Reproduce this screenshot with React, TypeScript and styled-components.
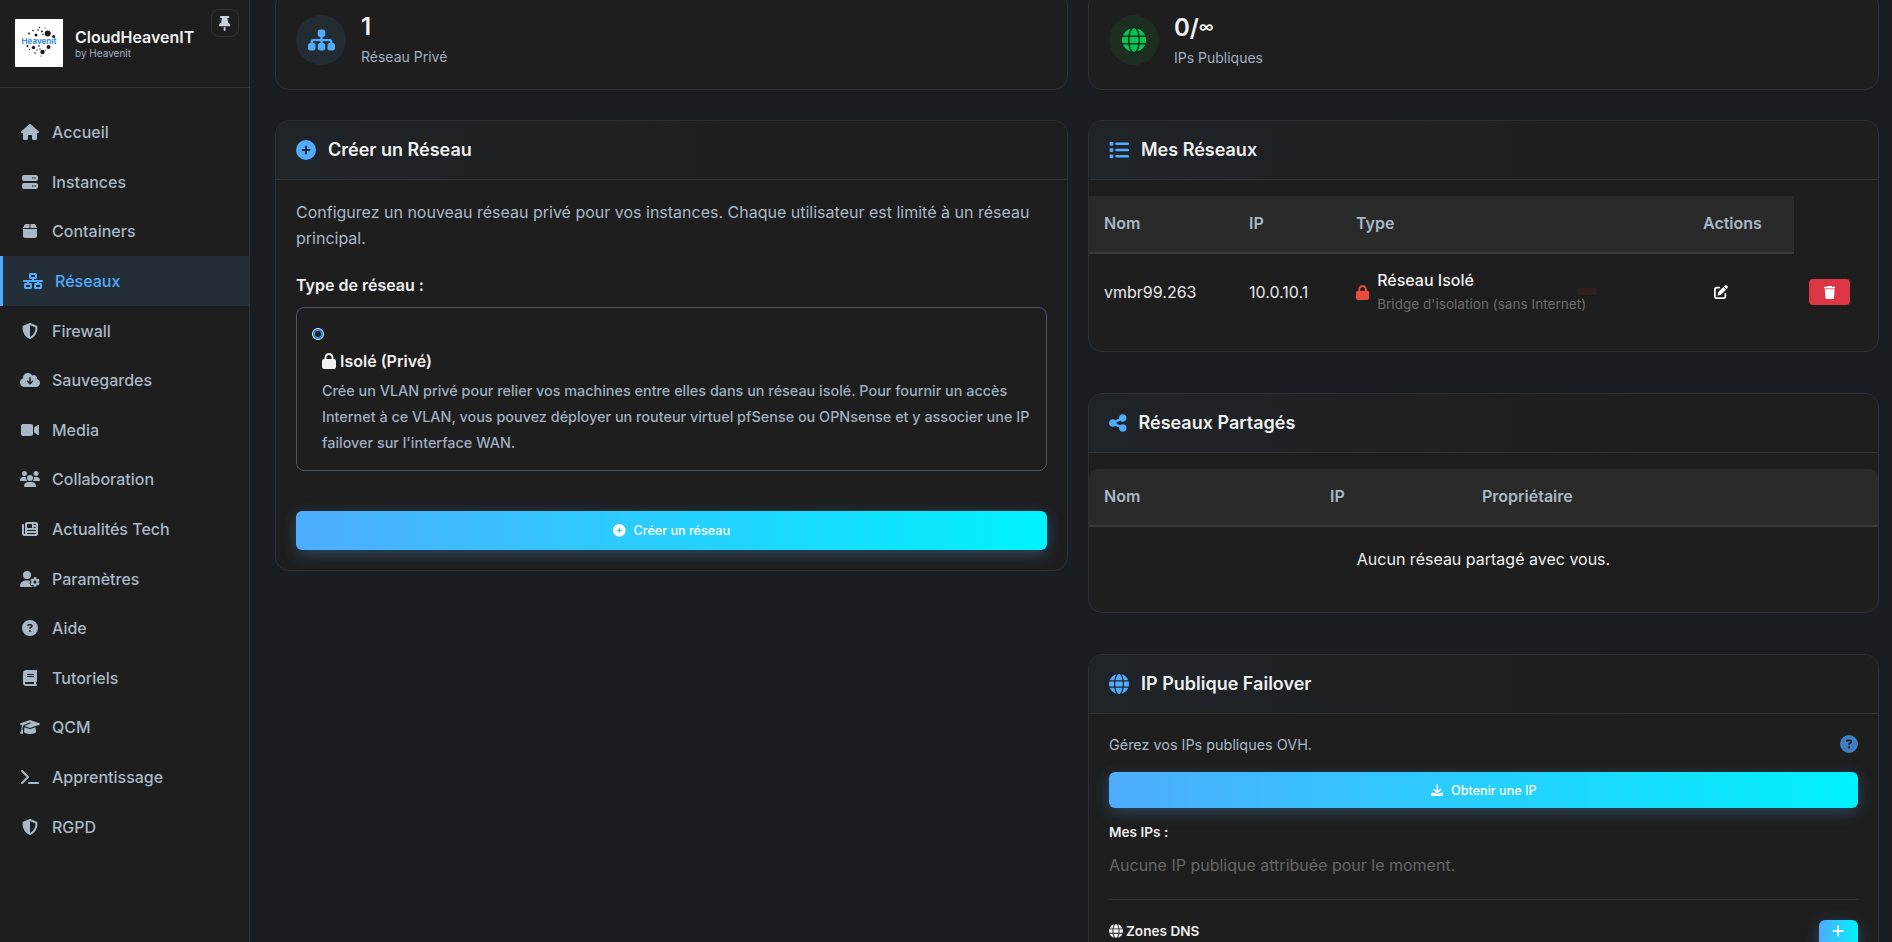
import React from 'react'
import styled, { createGlobalStyle } from 'styled-components'
import {
    FaBook, FaBox, FaCirclePlus, FaCircleQuestion, FaCloudArrowDown, FaDownload, FaGlobe, FaGraduationCap, FaHouse, FaList, FaLock,
    FaNetworkWired, FaNewspaper, FaPenToSquare, FaPlus, FaServer, FaShareNodes, FaShieldHalved,
    FaSitemap, FaTerminal, FaThumbtack, FaTrash, FaUserGear, FaUsers, FaVideo,
} from 'react-icons/fa6'

const GlobalStyle = createGlobalStyle`
    * { box-sizing: border-box; }
    html, body { margin: 0; height: 100%; overflow: hidden; }
    body {
        background: #1a1d21;
        color: #e8e8e8;
        font-family: Inter, "Liberation Sans", sans-serif;
    }
`

// font awesome glyphs are 1em high and as wide as their viewBox, react-icons squeezes them into a 1em square
const Glyph = styled.span<{ vw?: number }>`
    display: flex;
    svg {
        height: 1em;
        width: ${props => (props.vw ?? 512) / 512}em;
    }
`

const Shell = styled.div`
    display: flex;
    height: 100vh;
    overflow: hidden;
`

const Sidebar = styled.aside`
    flex: 0 0 250px;
    background: #1e1e1e;
    border-right: 1px solid #2c3034;
`

const Brand = styled.div`
    position: relative;
    display: flex;
    align-items: center;
    gap: 12px;
    height: 88px;
    padding: 0 15px 2px;
    border-bottom: 1px solid #333;
`

const LogoBox = styled.div`
    flex: 0 0 48px;
    height: 48px;
    background: #fff;
`

const BrandName = styled.div`
    font-size: 16px;
    font-weight: 600;
    line-height: 20px;
    color: #f0f0f0;
`

const BrandSub = styled.div`
    font-size: 10px;
    line-height: 12px;
    color: #a0aec0;
`

const PinButton = styled.button`
    position: absolute;
    top: 9px;
    right: 10px;
    width: 28px;
    height: 28px;
    display: flex;
    align-items: center;
    justify-content: center;
    padding: 0;
    font-size: 15px;
    color: #c9d3dd;
    background: #1e1e1e;
    border: 1px solid #333;
    border-radius: 8px;
`

const Nav = styled.nav`
    display: flex;
    flex-direction: column;
    padding-top: 19.5px;
`

const NavItem = styled.a<{ active?: boolean }>`
    display: flex;
    align-items: center;
    gap: 12px;
    height: 49.6px;
    padding-left: 20px;
    font-size: 16px;
    font-weight: 500;
    color: ${props => props.active ? '#4facfe' : '#a9b8c6'};
    background: ${props => props.active ? '#242e38' : 'transparent'};
    border-left: ${props => props.active ? '3px solid #4facfe' : 'none'};
`

const NavIcon = styled(Glyph)`
    flex: 0 0 20px;
    justify-content: center;
    font-size: 16px;
    color: inherit;
`

const Main = styled.main`
    flex: 1;
    padding: 0 13px 0 25px;
    overflow: hidden;
`

const TopRow = styled.div`
    display: grid;
    grid-template-columns: 793px 1fr;
    gap: 20px;
    margin-top: -9px;
`

const Columns = styled.div`
    display: grid;
    grid-template-columns: 793px 1fr;
    gap: 20px;
    margin-top: 30px;
`

const Column = styled.div`
    display: flex;
    flex-direction: column;
    gap: 41px;
`

const Card = styled.section`
    background: #1e1e1e;
    border: 1px solid #2c3034;
    border-radius: 14px;
    overflow: hidden;
`

const StatBody = styled.div`
    display: flex;
    align-items: center;
    gap: 15px;
    padding: 20px 20px 21px;
`

const StatIcon = styled(Glyph)<{ tint: string; bg: string }>`
    flex: 0 0 50px;
    height: 50px;
    align-items: center;
    justify-content: center;
    font-size: 24px;
    border-radius: 50%;
    color: ${props => props.tint};
    background: ${props => props.bg};
`

const StatValue = styled.div`
    font-size: 24px;
    font-weight: 600;
    line-height: 29px;
    color: #f2f2f2;
`

const StatUnit = styled.span`
    font-size: 15px;
    vertical-align: 4px;
`

const StatLabel = styled.div`
    margin-top: 5px;
    font-size: 14px;
    line-height: 21px;
    color: #a0aec0;
`

const CardHeader = styled.header`
    display: flex;
    align-items: center;
    gap: 12px;
    height: 59px;
    padding: 0 20px 1px;
    font-size: 18px;
    font-weight: 600;
    color: #f0f0f0;
    background: linear-gradient(90deg, #1f2429 0%, #1e1e1e 70%);
    border-bottom: 1px solid #333;
`

const HeaderIcon = styled(Glyph)`
    font-size: 20px;
    color: #4facfe;
`

const CardBody = styled.div`
    padding: 19px 20px 20px;
`

const TableBody = styled.div`
    padding: 16px 0 21px;
`

const Lead = styled.p`
    margin: 0;
    font-size: 16px;
    line-height: 26px;
    color: #a9b8c6;
`

const FieldLabel = styled.div`
    margin-top: 21px;
    font-size: 16px;
    font-weight: 600;
    line-height: 26px;
    color: #f0f0f0;
`

const OptionBox = styled.div`
    margin-top: 9px;
    padding: 20px 15px 14px;
    border: 1px solid #4a5568;
    border-radius: 8px;
`

const Radio = styled.span`
    display: block;
    width: 12px;
    height: 12px;
    background: #1e1e1e;
    border: 1px solid #e0f0ff;
    border-radius: 50%;
    box-shadow: inset 0 0 0 2px #2a8cf0;
`

const OptionText = styled.div`
    margin: 8px 0 0 10px;
`

const OptionTitle = styled.div`
    display: flex;
    align-items: center;
    gap: 4px;
    font-size: 16px;
    font-weight: 600;
    line-height: 26px;
    color: #f0f0f0;
`

const OptionDesc = styled.div`
    margin-top: 4px;
    font-size: 14.4px;
    font-weight: 500;
    line-height: 26px;
    color: #a0aec0;
`

const GradientButton = styled.button<{ tall?: boolean; top?: number }>`
    display: flex;
    align-items: center;
    justify-content: center;
    gap: 8px;
    width: 100%;
    height: ${props => props.tall ? '39px' : '36px'};
    margin-top: ${props => props.top ?? 0}px;
    padding: 0;
    font-family: inherit;
    font-size: 12.6px;
    font-weight: 500;
    color: #fff;
    background: linear-gradient(90deg, #4facfe 0%, #00f2fe 100%);
    border: none;
    border-radius: 6px;
    box-shadow: 0 4px 15px rgba(79, 172, 254, 0.3);
`

const Table = styled.table`
    width: 100%;
    table-layout: fixed;
    border-collapse: separate;
    border-spacing: 0;
`

const Th = styled.th<{ w?: string; rounded?: boolean }>`
    width: ${props => props.w ?? 'auto'};
    height: 58px;
    padding: 0 15px 3px;
    text-align: left;
    font-size: 16px;
    font-weight: 600;
    color: #a9b8c6;
    background: #2a2a2a;
    border-bottom: 2px solid #3a3a3a;
    &:first-child { border-top-left-radius: ${props => props.rounded ? '8px' : '0'}; }
    &:last-child { border-top-right-radius: ${props => props.rounded ? '8px' : '0'}; }
`

const Td = styled.td`
    position: relative;
    height: 76px;
    padding: 0 15px;
    font-size: 16px;
    color: #e8e8e8;
`

const EmptyRow = styled.td`
    height: 64px;
    text-align: center;
    font-size: 16px;
    color: #f0f0f0;
`

const TypeCell = styled.div`
    display: flex;
    align-items: center;
    gap: 8px;
`

const TypeLock = styled(Glyph)`
    font-size: 15px;
    color: #e74c3c;
`

const TypeName = styled.div`
    font-weight: 500;
    line-height: 24px;
    color: #f0f0f0;
`

const TypeSub = styled.div`
    font-size: 13.6px;
    line-height: 24px;
    color: #6c6c6c;
`

const Smudge = styled.span`
    position: absolute;
    top: 34px;
    left: 236px;
    width: 20px;
    height: 7px;
    border-radius: 3px;
    background: rgba(220, 53, 69, 0.1);
`

const EditIcon = styled(Glyph)`
    justify-content: center;
    font-size: 14px;
    padding-right: 40px;
    color: #fff;
`

const DeleteButton = styled.button`
    display: flex;
    align-items: center;
    justify-content: center;
    width: 41px;
    height: 26px;
    padding: 0;
    font-size: 13px;
    color: #fff;
    background: #dc3545;
    border: none;
    border-radius: 4px;
`

const HelpRow = styled.div`
    display: flex;
    align-items: center;
    justify-content: space-between;
    height: 22px;
    margin-bottom: 17px;
    font-size: 14.4px;
    color: #a9b8c6;
`

const HelpIcon = styled(Glyph)`
    font-size: 18px;
    color: #3d7fc1;
`

const SmallHeading = styled.div`
    margin-top: 14px;
    font-size: 13.6px;
    font-weight: 600;
    line-height: 20px;
    color: #f0f0f0;
`

const MutedLine = styled.div`
    margin-top: 10px;
    font-size: 16px;
    line-height: 26px;
    color: #666;
`

const Divider = styled.hr`
    margin: 21px 0 0;
    border: none;
    border-top: 1px solid #333;
`

const ZoneRow = styled.div`
    display: flex;
    align-items: flex-start;
    justify-content: space-between;
    margin-top: 20px;
`

const ZoneTitle = styled.div`
    display: flex;
    align-items: center;
    gap: 3px;
    height: 22px;
    font-size: 13.6px;
    font-weight: 600;
    color: #f0f0f0;
`

const ZoneIcon = styled(Glyph)`
    font-size: 14px;
`

const AddButton = styled.button`
    display: flex;
    align-items: center;
    justify-content: center;
    width: 39px;
    height: 31px;
    padding: 0 0 10px;
    font-size: 14px;
    color: #fff;
    background: linear-gradient(90deg, #4facfe 0%, #00f2fe 100%);
    border: none;
    border-radius: 6px;
    box-shadow: 0 4px 15px rgba(79, 172, 254, 0.3);
`

const navItems = [
    { label: 'Accueil', icon: <FaHouse />, vw: 576 },
    { label: 'Instances', icon: <FaServer />, vw: 512 },
    { label: 'Containers', icon: <FaBox />, vw: 448 },
    { label: 'Réseaux', icon: <FaNetworkWired />, vw: 640, active: true },
    { label: 'Firewall', icon: <FaShieldHalved />, vw: 512 },
    { label: 'Sauvegardes', icon: <FaCloudArrowDown />, vw: 640 },
    { label: 'Media', icon: <FaVideo />, vw: 576 },
    { label: 'Collaboration', icon: <FaUsers />, vw: 640 },
    { label: 'Actualités Tech', icon: <FaNewspaper />, vw: 512 },
    { label: 'Paramètres', icon: <FaUserGear />, vw: 640 },
    { label: 'Aide', icon: <FaCircleQuestion />, vw: 512 },
    { label: 'Tutoriels', icon: <FaBook />, vw: 448 },
    { label: 'QCM', icon: <FaGraduationCap />, vw: 640 },
    { label: 'Apprentissage', icon: <FaTerminal />, vw: 576 },
    { label: 'RGPD', icon: <FaShieldHalved />, vw: 512 },
]

// x, y, r of the dots around the word in the logo
const logoDots = [
    [32.7, 14.4, 3], [38.6, 17.5, 1.5], [21, 16, 1.5], [14, 14.5, 0.9], [18, 11.5, 0.8], [23, 11, 0.8], [27, 12.5, 1],
    [24.5, 8.5, 0.7], [28, 15.5, 0.7], [30, 9, 0.6], [27.5, 33, 2.2], [18.5, 28.5, 1.7], [33.5, 28, 2], [12.5, 27, 1],
    [24, 27, 0.8], [25, 30, 0.7], [20, 34, 0.8], [14.5, 30.5, 0.7], [30.5, 31, 0.6], [22, 31, 0.7], [26, 37, 0.6],
]

function Logo() {
    return (
        <LogoBox>
            <svg width="48" height="48" viewBox="0 0 48 48">
                {logoDots.map(([x, y, r], index) => <circle key={index} cx={x} cy={y} r={r} fill="#1a1a1a" />)}
                <text x="24" y="24.5" textAnchor="middle" fontSize="8" fontWeight="700" fill="#3d8bdb" fontFamily="Inter, sans-serif">Heavenit</text>
            </svg>
        </LogoBox>
    )
}

function App() {
    return (
        <Shell>
            <GlobalStyle />
            <Sidebar>
                <Brand>
                    <Logo />
                    <div>
                        <BrandName>CloudHeavenIT</BrandName>
                        <BrandSub>by Heavenit</BrandSub>
                    </div>
                    <PinButton><Glyph vw={384}><FaThumbtack /></Glyph></PinButton>
                </Brand>
                <Nav>
                    {navItems.map(item => (
                        <NavItem key={item.label} active={item.active}>
                            <NavIcon vw={item.vw}>{item.icon}</NavIcon>
                            {item.label}
                        </NavItem>
                    ))}
                </Nav>
            </Sidebar>
            <Main>
                <TopRow>
                    <Card>
                        <StatBody>
                            <StatIcon vw={576} tint="#4facfe" bg="#232b33"><FaSitemap /></StatIcon>
                            <div>
                                <StatValue>1</StatValue>
                                <StatLabel>Réseau Privé</StatLabel>
                            </div>
                        </StatBody>
                    </Card>
                    <Card>
                        <StatBody>
                            <StatIcon tint="#00c853" bg="#1c2d22"><FaGlobe /></StatIcon>
                            <div>
                                <StatValue>0/<StatUnit>∞</StatUnit></StatValue>
                                <StatLabel>IPs Publiques</StatLabel>
                            </div>
                        </StatBody>
                    </Card>
                </TopRow>
                <Columns>
                    <Column>
                        <Card>
                            <CardHeader><HeaderIcon><FaCirclePlus /></HeaderIcon>Créer un Réseau</CardHeader>
                            <CardBody>
                                <Lead>Configurez un nouveau réseau privé pour vos instances. Chaque utilisateur est limité à un réseau principal.</Lead>
                                <FieldLabel>Type de réseau :</FieldLabel>
                                <OptionBox>
                                    <Radio />
                                    <OptionText>
                                        <OptionTitle><Glyph vw={448}><FaLock /></Glyph>Isolé (Privé)</OptionTitle>
                                        <OptionDesc>Crée un VLAN privé pour relier vos machines entre elles dans un réseau isolé. Pour fournir un accès Internet à ce VLAN, vous pouvez déployer un routeur virtuel pfSense ou OPNsense et y associer une IP failover sur l'interface WAN.</OptionDesc>
                                    </OptionText>
                                </OptionBox>
                                <GradientButton tall top={40}><FaCirclePlus />Créer un réseau</GradientButton>
                            </CardBody>
                        </Card>
                    </Column>
                    <Column>
                        <Card>
                            <CardHeader><HeaderIcon><FaList /></HeaderIcon>Mes Réseaux</CardHeader>
                            <TableBody>
                                <Table>
                                    <thead>
                                        <tr>
                                            <Th w="145px">Nom</Th>
                                            <Th w="107px">IP</Th>
                                            <Th w="347px">Type</Th>
                                            <Th w="106px">Actions</Th>
                                        </tr>
                                    </thead>
                                    <tbody>
                                        <tr>
                                            <Td>vmbr99.263</Td>
                                            <Td>10.0.10.1</Td>
                                            <Td>
                                                <TypeCell>
                                                    <TypeLock vw={448}><FaLock /></TypeLock>
                                                    <div>
                                                        <TypeName>Réseau Isolé</TypeName>
                                                        <TypeSub>Bridge d'isolation (sans Internet)</TypeSub>
                                                    </div>
                                                </TypeCell>
                                                <Smudge />
                                            </Td>
                                            <Td><EditIcon><FaPenToSquare /></EditIcon></Td>
                                            <Td><DeleteButton><Glyph vw={448}><FaTrash /></Glyph></DeleteButton></Td>
                                        </tr>
                                    </tbody>
                                </Table>
                            </TableBody>
                        </Card>
                        <Card>
                            <CardHeader><HeaderIcon vw={448}><FaShareNodes /></HeaderIcon>Réseaux Partagés</CardHeader>
                            <TableBody>
                                <Table>
                                    <thead>
                                        <tr>
                                            <Th w="226px" rounded>Nom</Th>
                                            <Th w="152px" rounded>IP</Th>
                                            <Th rounded>Propriétaire</Th>
                                        </tr>
                                    </thead>
                                    <tbody>
                                        <tr><EmptyRow colSpan={3}>Aucun réseau partagé avec vous.</EmptyRow></tr>
                                    </tbody>
                                </Table>
                            </TableBody>
                        </Card>
                        <Card>
                            <CardHeader><HeaderIcon><FaGlobe /></HeaderIcon>IP Publique Failover</CardHeader>
                            <CardBody>
                                <HelpRow>Gérez vos IPs publiques OVH.<HelpIcon><FaCircleQuestion /></HelpIcon></HelpRow>
                                <GradientButton><FaDownload />Obtenir une IP</GradientButton>
                                <SmallHeading>Mes IPs :</SmallHeading>
                                <MutedLine>Aucune IP publique attribuée pour le moment.</MutedLine>
                                <Divider />
                                <ZoneRow>
                                    <ZoneTitle><ZoneIcon><FaGlobe /></ZoneIcon>Zones DNS</ZoneTitle>
                                    <AddButton><Glyph vw={448}><FaPlus /></Glyph></AddButton>
                                </ZoneRow>
                            </CardBody>
                        </Card>
                    </Column>
                </Columns>
            </Main>
        </Shell>
    )
}

export default App
